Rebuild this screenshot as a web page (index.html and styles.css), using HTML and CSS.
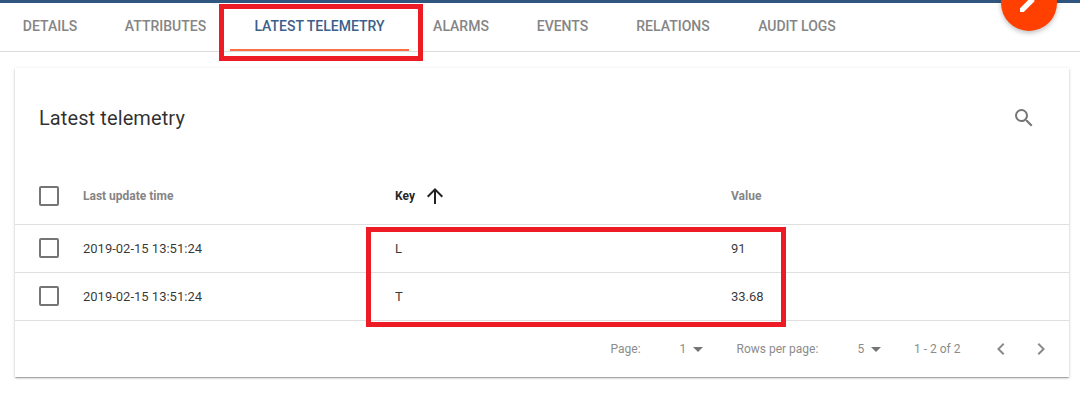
FILE: index.html
```html
<!DOCTYPE html>
<html lang="en">
<head>
<meta charset="utf-8">
<title>Latest telemetry</title>
<link rel="stylesheet" href="styles.css">
</head>
<body>
<div class="page">
  <header class="topbar"></header>
  <nav class="tabs">
    <div class="tab tab-details"><span>DETAILS</span></div>
    <div class="tab tab-attributes"><span>ATTRIBUTES</span></div>
    <div class="tab tab-telemetry active"><span>LATEST TELEMETRY</span></div>
    <div class="tab tab-alarms"><span>ALARMS</span></div>
    <div class="tab tab-events"><span>EVENTS</span></div>
    <div class="tab tab-relations"><span>RELATIONS</span></div>
    <div class="tab tab-audit"><span>AUDIT LOGS</span></div>
  </nav>
  <main class="card">
    <div class="toolbar">
      <h2 class="title">Latest telemetry</h2>
      <svg class="icon muted" viewBox="0 0 24 24"><path d="M15.5 14h-.79l-.28-.27A6.47 6.47 0 0 0 16 9.5 6.5 6.5 0 1 0 9.5 16c1.61 0 3.09-.59 4.23-1.57l.27.28v.79l5 4.99L20.49 19l-4.99-5zm-6 0C7.01 14 5 11.99 5 9.5S7.01 5 9.5 5 14 7.01 14 9.5 11.99 14 9.5 14z"/></svg>
    </div>
    <div class="row head">
      <span class="checkbox"></span>
      <span class="time">Last update time</span>
      <span class="key sorted"><span>Key</span><svg class="icon" viewBox="0 0 24 24"><path d="M4 12l1.41 1.41L11 7.83V20h2V7.83l5.58 5.59L20 12l-8-8-8 8z"/></svg></span>
      <span class="value">Value</span>
    </div>
    <div class="row">
      <span class="checkbox"></span>
      <span class="time">2019-02-15 13:51:24</span>
      <span class="key">L</span>
      <span class="value">91</span>
    </div>
    <div class="row">
      <span class="checkbox"></span>
      <span class="time">2019-02-15 13:51:24</span>
      <span class="key">T</span>
      <span class="value">33.68</span>
    </div>
    <footer class="pagination">
      <span class="page-label">Page:</span>
      <span class="select page-select"><span>1</span><i class="caret"></i></span>
      <span class="rows-label">Rows per page:</span>
      <span class="select rows-select"><span>5</span><i class="caret"></i></span>
      <span class="range">1 - 2 of 2</span>
      <svg class="icon nav" viewBox="0 0 24 24"><path d="M15.41 7.41L14 6l-6 6 6 6 1.41-1.41L10.83 12z"/></svg>
      <svg class="icon nav" viewBox="0 0 24 24"><path d="M10 6L8.59 7.41 13.17 12l-4.58 4.59L10 18l6-6z"/></svg>
    </footer>
  </main>
  <div class="fab"><svg class="icon" viewBox="0 0 24 24"><path d="M3 17.25V21h3.75L17.81 9.94l-3.75-3.75L3 17.25zM20.71 7.04a1 1 0 0 0 0-1.41l-2.34-2.34a1 1 0 0 0-1.41 0l-1.83 1.83 3.75 3.75 1.83-1.83z"/></svg></div>
  <div class="highlight highlight-tab"></div>
  <div class="highlight highlight-data"></div>
</div>
</body>
</html>
```
FILE: styles.css
```css
* { box-sizing: border-box; }
body { margin: 0; background: #fff; font-family: Roboto, sans-serif; color: rgba(0,0,0,.87); }
.page { position: relative; width: 1080px; height: 404px; overflow: hidden; }
.topbar { height: 3px; background: #305680; }
.tabs { display: flex; height: 49px; margin-left: -1px; border-bottom: 1px solid #dcdcdc; }
.tab { display: flex; justify-content: center; height: 48px; padding-top: 11px; font-size: 14px; line-height: 24px; font-weight: 500; color: #858585; white-space: nowrap; border-bottom: 2px solid transparent; }
.tab.active { color: #3c608a; border-bottom-color: #ff6f43; }
.tab-details { width: 102px; }
.tab-attributes { width: 129px; }
.tab-telemetry { width: 179px; }
.tab-alarms { width: 104px; }
.tab-events { width: 99px; }
.tab-relations { width: 122px; }
.tab-audit { width: 126px; }
.card { width: 1054px; height: 309px; margin: 16px 0 0 15px; background: #fff; box-shadow: 0 1px 3px rgba(0,0,0,.2), 0 1px 1px rgba(0,0,0,.14), 0 2px 1px -1px rgba(0,0,0,.12); }
.toolbar { display: flex; align-items: center; justify-content: space-between; height: 100px; padding: 0 32.75px 0 24px; }
.title { margin: 0; font-size: 20px; font-weight: 400; letter-spacing: .1px; color: rgba(0,0,0,.82); }
.icon { display: block; width: 24px; height: 24px; flex: none; fill: currentColor; }
.muted { color: #757575; }
.row { display: flex; align-items: center; height: 48px; padding-left: 24px; border-bottom: 1px solid #dfdfdf; font-size: 13px; color: rgba(0,0,0,.8); }
.head { height: 57px; font-size: 12px; font-weight: 700; color: #858585; }
.checkbox { width: 20px; height: 20px; border: 2px solid #757575; border-radius: 2px; margin-right: 24px; }
.row:not(.head) .checkbox { margin-bottom: 1px; }
.time { width: 312px; }
.key { width: 336px; }
.sorted { display: flex; align-items: center; gap: 8px; color: rgba(0,0,0,.87); }
.pagination { display: flex; align-items: center; height: 56px; padding-left: 595.5px; font-size: 12px; color: #8c8c8c; }
.page-label { width: 69px; }
.select { display: flex; align-items: center; justify-content: space-between; }
.page-select { width: 23.5px; }
.caret { border: 5px solid transparent; border-top-color: #757575; border-bottom-width: 0; }
.rows-label { margin-left: 33.5px; width: 121px; }
.rows-select { width: 23.5px; }
.range { margin-left: 33px; width: 75px; }
.nav { color: #8a8a8a; }
.nav + .nav { margin-left: 16px; }
.fab { position: absolute; left: 1001px; top: -25px; width: 56px; height: 56px; display: flex; align-items: center; justify-content: center; border-radius: 50%; background: #ff4000; color: #fff; box-shadow: 0 2px 5px rgba(0,0,0,.26); }
.highlight { position: absolute; border: 5px solid #ed1c24; }
.highlight-tab { left: 219px; top: 4px; width: 204px; height: 57px; }
.highlight-data { left: 366px; top: 227px; width: 420px; height: 100px; }
```
